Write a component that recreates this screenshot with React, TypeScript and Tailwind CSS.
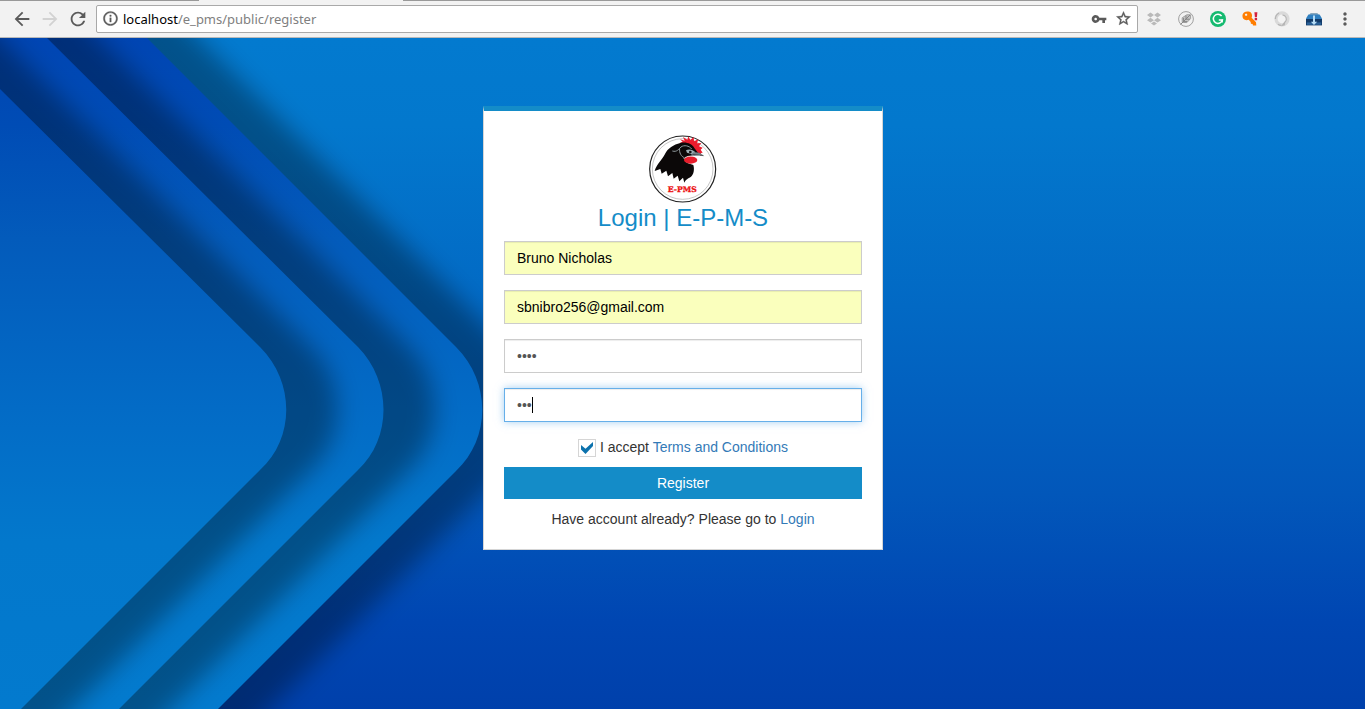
import { useState } from "react";
import type { ReactNode } from "react";
import {
  MdArrowBack,
  MdArrowForward,
  MdInfoOutline,
  MdMoreVert,
  MdRefresh,
  MdStarBorder,
  MdVpnKey,
} from "react-icons/md";

function ToolbarButton({ label, className, children }: { label: string; className: string; children: ReactNode }) {
  return (
    <button type="button" aria-label={label} className={`flex h-7 shrink-0 items-center justify-center ${className}`}>
      {children}
    </button>
  );
}

function DropboxIcon() {
  return (
    <svg width="16" height="16" viewBox="0 0 16 16" fill="#b9b9b9" aria-hidden="true">
      <path d="M4.5 1.5 8 4 4.5 6.4 1 4zM11.5 1.5 15 4l-3.5 2.4L8 4zM4.5 6.8 8 9.2l-3.5 2.4L1 9.2zM11.5 6.8 15 9.2l-3.5 2.4L8 9.2z" />
      <path d="M8 10.4 11 12.5 8 14.6 5 12.5z" />
    </svg>
  );
}

function FeatherIcon() {
  return (
    <svg width="16" height="16" viewBox="0 0 16 16" fill="none" aria-hidden="true">
      <circle cx="8" cy="8" r="7.4" stroke="#a0a0a0" />
      <path d="M4.200 11.400V6.800L8.800 3.800H12.600V7.600L8.800 11.600z" fill="#c4c4c4" stroke="#a0a0a0" />
      <path d="M2.400 13.600 12 4M8 4.600V8.200H11.800M5.600 7V10.600H9.200" stroke="#858585" />
    </svg>
  );
}

function GrammarIcon() {
  return (
    <svg width="16" height="16" viewBox="0 0 16 16" fill="none" aria-hidden="true">
      <circle cx="8" cy="8" r="8" fill="#15ba70" />
      <path d="M11.600 5A4.600 4.600 0 1 0 12.400 9H8.800" stroke="#fff" strokeWidth="1.500" />
      <path d="M12.200 8.400V11.600" stroke="#fff" strokeWidth="1.400" />
    </svg>
  );
}

function AlertKeyIcon() {
  return (
    <svg width="16" height="16" viewBox="0 0 16 16" aria-hidden="true">
      <path
        fill="#ff7d00"
        d="M2 1.400C3.800.3 7.600.3 9 1.700c1.300 1.300 1.200 3.400.6 5l4.400 4.600.3 3.200-3.300.1-.4-1.700-1.700-.2-.2-1.800L6.700 8.700C4.800 9.500 2.600 9.200 1.300 7.800-.1 6 .3 2.700 2 1.400zM3.300 3a1.100 1.100 0 1 0 1.600 1.600A1.100 1.100 0 0 0 3.300 3z"
      />
      <path fill="#d4213d" d="M12.400 1.200h3l-.5 5h-2zM12.700 7h2.400v2.200h-2.400z" />
    </svg>
  );
}

function RingIcon() {
  return (
    <svg width="16" height="16" viewBox="0 0 16 16" fill="none" aria-hidden="true">
      <circle cx="8" cy="7.800" r="6" stroke="#d9d9d9" strokeWidth="3.200" />
      <path d="M1.400 8A6.600 6.600 0 0 1 5 2M4 13.200A6.600 6.600 0 0 0 7.400 14.400M8.500 3.800a4.300 4.300 0 0 1 2.600 7.300" stroke="#b4b4b4" strokeWidth="1.200" />
      <path d="M9.600 11.800 11.400 9.800 10.800 14.200 7 15.200z" fill="#b4b4b4" />
    </svg>
  );
}

function DownloadBoxIcon() {
  return (
    <svg width="16" height="16" viewBox="0 0 16 16" aria-hidden="true">
      <path fill="#8aa7bb" d="M3.200 4 4.600 2h6.800l1.400 2z" />
      <path fill="#2f7fc0" d="M2.400 3.400h11.200L16 7.400V9H0V7.400z" />
      <path fill="#123a68" d="M0 8h16v6.400H0z" />
      <path fill="#2a6199" d="M.8 11.400h14.400v2.400H.8z" />
      <path fill="#b5dcf5" d="M7 4.500h2v6.300h2.200L8 14l-3.200-3.200H7z" />
    </svg>
  );
}

function Toolbar() {
  return (
    <header className="relative flex h-[38px] items-center border-b border-[#b9b9b9] bg-[#f2f2f2] pr-[5px] pl-2 text-[#5a5a5a]">
      <div className="absolute inset-x-0 top-0 flex" aria-hidden="true">
        <span className="h-px w-[199px] bg-[#999]" />
        <span className="h-px w-[204px]" />
        <span className="h-px flex-1 bg-[#999]" />
      </div>
      <ToolbarButton label="Back" className="w-7">
        <MdArrowBack size={22} />
      </ToolbarButton>
      <ToolbarButton label="Forward" className="w-7 text-[#d2d2d2]">
        <MdArrowForward size={22} />
      </ToolbarButton>
      <ToolbarButton label="Reload" className="w-7">
        <MdRefresh size={22} />
      </ToolbarButton>
      <div className="ml-1 flex h-7 min-w-0 flex-1 items-center rounded-xs border border-[#a9a9a9] bg-white px-[5px]">
        <MdInfoOutline
          size={17}
          className="shrink-0 stroke-current stroke-[0.5] [&>path[fill=none]]:stroke-none"
          aria-hidden="true"
        />
        <p className="ml-1 min-w-0 flex-1 truncate font-['Noto_Sans',sans-serif] text-[13px] leading-5 text-[#808080]">
          <span className="text-black">localhost</span>/e_pms/public/register
        </p>
        <ToolbarButton label="Saved password" className="w-8">
          <MdVpnKey size={16} />
        </ToolbarButton>
        <ToolbarButton label="Bookmark this page" className="w-[17px]">
          <MdStarBorder size={17} className="stroke-current stroke-[0.5] [&>path[fill=none]]:stroke-none" />
        </ToolbarButton>
      </div>
      <ToolbarButton label="Dropbox" className="w-8">
        <DropboxIcon />
      </ToolbarButton>
      <ToolbarButton label="Notes" className="w-8">
        <FeatherIcon />
      </ToolbarButton>
      <ToolbarButton label="Grammar check" className="w-8">
        <GrammarIcon />
      </ToolbarButton>
      <ToolbarButton label="Key manager" className="w-8">
        <AlertKeyIcon />
      </ToolbarButton>
      <ToolbarButton label="Sync" className="w-8">
        <RingIcon />
      </ToolbarButton>
      <ToolbarButton label="Downloads" className="w-8">
        <DownloadBoxIcon />
      </ToolbarButton>
      <ToolbarButton label="Menu" className="w-[30px]">
        <MdMoreVert size={20} />
      </ToolbarButton>
    </header>
  );
}

const chevrons = [
  "M-653 -800 L147 0 L456 309 C491 344 491 400 456 433 L-200 1089 H-653 Z",
  "M-753 -800 L47 0 L358 309 C392 344 392 400 358 432 L-200 990 H-753 Z",
  "M-851 -800 L0 51 L260 309 C295 344 295 400 260 432 L-200 892 H-851 Z",
];

function Backdrop() {
  return (
    <svg
      className="absolute inset-0 h-full w-full"
      viewBox="0 0 1365 671"
      preserveAspectRatio="xMinYMin slice"
      aria-hidden="true"
    >
      <defs>
        <linearGradient id="sky" gradientUnits="userSpaceOnUse" x1="0" y1="0" x2="0" y2="671">
          <stop offset="0" stopColor="#037acf" />
          <stop offset="0.13" stopColor="#0378cd" />
          <stop offset="0.4" stopColor="#0269c4" />
          <stop offset="0.68" stopColor="#0257ba" />
          <stop offset="0.87" stopColor="#0046b2" />
          <stop offset="1" stopColor="#0040ab" />
        </linearGradient>
        <linearGradient id="band" gradientUnits="userSpaceOnUse" x1="0" y1="0" x2="0" y2="671">
          <stop offset="0" stopColor="#0045b3" />
          <stop offset="0.13" stopColor="#004cb5" />
          <stop offset="0.3" stopColor="#035bbb" />
          <stop offset="0.55" stopColor="#036bc6" />
          <stop offset="0.75" stopColor="#0378cc" />
          <stop offset="1" stopColor="#037ace" />
        </linearGradient>
        <filter id="soft" filterUnits="userSpaceOnUse" x="-200" y="-200" width="1000" height="1100">
          <feGaussianBlur stdDeviation="12" />
        </filter>
      </defs>
      <rect width="1365" height="671" fill="url(#sky)" />
      {chevrons.map((d) => (
        <g key={d}>
          <path d={d} transform="translate(51 0)" fill="#000" fillOpacity="0.33" filter="url(#soft)" />
          <path d={d} fill="url(#band)" />
        </g>
      ))}
    </svg>
  );
}

function RoosterLogo() {
  return (
    <svg className="mx-auto block h-[68px] w-[68px]" viewBox="27 29 204 204" role="img" aria-label="E-PMS logo">
      <circle cx="128" cy="131" r="99" fill="#fff" stroke="#222" strokeWidth="3.500" />
      <circle cx="128" cy="131" r="91" fill="none" stroke="#8a8a8a" strokeWidth="1.500" />
      <path
        fill="#ea1c2d"
        d="M117 54 128 49 120 42 134 46 129 35 142 43 145 33 151 44 161 35 162 48 175 42 171 54 184 53 177 63 188 67 182 73 188 82 183 83 184 92 172 84 164 72 150 59 136 56z"
      />
      <path
        fill="#0b0808"
        d="M44 137C50 116 67 103 75 86C83 69 101 58 121 53C139 49 157 56 163 68L172 80 178 86 166 89 146 93C132 96 130 106 142 113L160 119C164 132 161 148 153 154C144 161 138 160 133 172L129 157 118 168 113 151 101 160 97 143 84 153 79 136 65 145 61 131z"
      />
      <path fill="none" stroke="#929b9e" strokeWidth="3" d="M97 77C111 81 115 72 123 65C132 58 148 61 155 71M119 70C117 82 124 94 133 97" />
      <path fill="#9caeb4" d="M138 75C147 70 160 73 166 82L157 87 141 82z" />
      <circle cx="151" cy="80" r="4" fill="#111" />
      <path fill="#718287" d="M161 81C175 80 184 84 193 93L178 90 164 91 153 89z" />
      <path fill="none" stroke="#222" strokeWidth="1.500" d="M157 87 190 91" />
      <ellipse cx="152" cy="104" rx="20" ry="11" fill="#e61d2b" />
      <path fill="none" stroke="#fff" strokeWidth="2" d="M131 101C138 90 163 90 173 98" />
      <text
        x="127"
        y="200"
        textAnchor="middle"
        className="font-['DejaVu_Serif',serif] text-[23px] font-bold"
        fill="#ec1313"
        stroke="#ec1313"
        strokeWidth="1"
      >
        E-PMS
      </text>
    </svg>
  );
}

const fieldBase =
  "block h-[34px] w-full border px-3 text-sm leading-5 outline-none shadow-[inset_0_1px_1px_rgba(0,0,0,0.075)]";

function RegisterForm() {
  const [accepted, setAccepted] = useState(true);

  return (
    <form
      onSubmit={(event) => event.preventDefault()}
      className="w-full max-w-[400px] border border-t-[5px] border-[#d5d5d5] border-t-[#148cc8] bg-white px-5 pt-6 pb-5 text-center text-sm leading-5 text-[#333]"
    >
      <RoosterLogo />
      <h1 className="mt-0.5 mb-2.5 text-2xl leading-[26px] text-[#148cc8]">Login | E-P-M-S</h1>
      <div className="flex flex-col gap-[15px]">
        <input
          type="text"
          aria-label="Name"
          defaultValue="Bruno Nicholas"
          className={`${fieldBase} border-[#ccc] bg-[#faffbd] text-black`}
        />
        <input
          type="email"
          aria-label="E-mail address"
          defaultValue="sbnibro256@gmail.com"
          className={`${fieldBase} border-[#ccc] bg-[#faffbd] text-black`}
        />
        <input
          type="password"
          aria-label="Password"
          defaultValue="1234"
          className={`${fieldBase} border-[#ccc] bg-white text-[#555]`}
        />
        <div className="relative">
          <input
            type="password"
            aria-label="Confirm password"
            defaultValue="123"
            className="block h-[34px] w-full border border-[#66afe9] bg-white px-3 text-sm leading-5 text-[#555] caret-transparent shadow-[inset_0_1px_1px_rgba(0,0,0,0.075),0_0_8px_rgba(102,175,233,0.6)] outline-none"
          />
          <span className="absolute top-[9px] left-7 h-4 w-px bg-black" aria-hidden="true" />
        </div>
        <div className="flex items-center justify-center gap-1">
          <span className="relative mt-0.5 flex h-[18px] w-[18px] items-center justify-center">
            <input
              id="accept"
              type="checkbox"
              checked={accepted}
              onChange={(event) => setAccepted(event.target.checked)}
              className="h-[18px] w-[18px] appearance-none border border-[#d5d5d5] bg-white"
            />
            {accepted && (
              <svg
                className="pointer-events-none absolute inset-0"
                width="18"
                height="18"
                viewBox="0 0 18 18"
                aria-hidden="true"
              >
                <path d="M3 6 7.500 9.800 15 3V7L7.500 15 3 10.600z" fill="#0c72ad" />
              </svg>
            )}
          </span>
          <p>
            <label htmlFor="accept">I accept</label>{" "}
            <a href="#terms" className="text-[#337ab7]">
              Terms and Conditions
            </a>
          </p>
        </div>
      </div>
      <button type="submit" className="mt-2.5 block h-8 w-full bg-[#148cc8] text-sm text-white">
        Register
      </button>
      <p className="mt-2.5">
        Have account already? Please go to{" "}
        <a href="#login" className="text-[#337ab7]">
          Login
        </a>
      </p>
    </form>
  );
}

export default function App() {
  return (
    <div className="flex min-h-screen flex-col font-['Liberation_Sans',Arial,sans-serif]">
      <Toolbar />
      <main className="relative flex flex-1 flex-col bg-[#0040ab]">
        <Backdrop />
        <div className="relative flex flex-1 items-start justify-center pt-[68px] pb-10 pl-px">
          <RegisterForm />
        </div>
      </main>
    </div>
  );
}
